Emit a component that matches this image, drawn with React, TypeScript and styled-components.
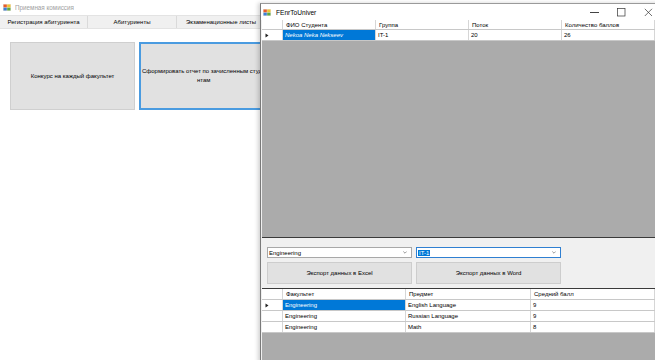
import React from "react";
import styled, { createGlobalStyle } from "styled-components";

const Global = createGlobalStyle`
  html, body { margin: 0; padding: 0; background: #ffffff; }
  body { font-family: "Liberation Sans", Arial, sans-serif; }
  #root { width: 655px; height: 360px; }
`;

const Desktop = styled.div`
  position: relative;
  width: 655px;
  height: 360px;
  overflow: hidden;
  background: #ffffff;
`;

/* ---------- back window ---------- */
const BackWindow = styled.div`
  display: flex;
  flex-direction: column;
  width: 655px;
  height: 360px;
  background: #ffffff;
`;

const BackTitle = styled.div`
  height: 15px;
  display: flex;
  align-items: center;
  gap: 4px;
  padding-left: 3px;
  font-size: 6.3px;
  color: #a0a0a0;
`;

const TabStrip = styled.div`
  height: 14px;
  display: flex;
  background: #f0f0f0;
  border-top: 1px solid #e3e3e3;
  border-bottom: 1px solid #e3e3e3;
  box-sizing: border-box;
`;

const Tab = styled.div<{ $w: number }>`
  width: ${(p) => p.$w}px;
  display: flex;
  align-items: center;
  justify-content: center;
  font-size: 6px;
  color: #000;
  border-right: 1px solid #dadada;
  box-sizing: border-box;
`;

const BackContent = styled.div`
  flex: 1;
  display: flex;
  align-items: flex-start;
  gap: 4px;
  padding: 13px 0 0 10px;
`;

const BigButton = styled.div<{ $focused?: boolean; $w: number }>`
  width: ${(p) => p.$w}px;
  height: 68px;
  flex-shrink: 0;
  box-sizing: border-box;
  background: #e1e1e1;
  border: ${(p) => (p.$focused ? "2px solid #4a9be0" : "1px solid #cfcfcf")};
  display: flex;
  align-items: center;
  justify-content: ${(p) => (p.$focused ? "flex-start" : "center")};
  padding-left: ${(p) => (p.$focused ? 1 : 0)}px;
  text-align: center;
  font-size: 6px;
  line-height: 9px;
  color: #000;
  white-space: nowrap;
`;

const ButtonLabel = styled.span`
  display: block;
  text-align: center;
`;

/* ---------- front window ---------- */
const FrontWindow = styled.div`
  position: absolute;
  left: 260px;
  top: 3px;
  width: 402px;
  height: 360px;
  display: flex;
  flex-direction: column;
  background: #f0f0f0;
  border-left: 1px solid #7a7a7a;
  border-top: 1px solid #9a9a9a;
  box-shadow: -2px 0 4px rgba(0, 0, 0, 0.18);
  box-sizing: border-box;
`;

const FrontTitle = styled.div`
  height: 16px;
  flex-shrink: 0;
  display: flex;
  align-items: center;
  background: #ffffff;
  padding-left: 2px;
  gap: 5px;
  font-size: 6.6px;
  color: #000;
`;

const TitleText = styled.span`
  flex: 1;
`;

const Controls = styled.div`
  display: flex;
  align-items: center;
  width: 81px;
  height: 100%;
`;

const CtrlBtn = styled.div`
  width: 27px;
  height: 100%;
  display: flex;
  align-items: center;
  justify-content: center;
`;

const GridArea = styled.div<{ $h: number }>`
  height: ${(p) => p.$h}px;
  flex-shrink: 0;
  background: #ababab;
  display: flex;
  flex-direction: column;
  margin-left: 1px;
  box-sizing: border-box;
`;

const TopGrid = styled(GridArea)`
  border-bottom: 1px solid #3a3a3a;
`;

const BottomGrid = styled(GridArea)`
  border-top: 1px solid #3a3a3a;
  flex: 1;
`;

const Row = styled.div<{ $h: number }>`
  display: grid;
  grid-template-columns: var(--cols);
  height: ${(p) => p.$h}px;
  background: #ffffff;
  border-bottom: 1px solid #c8c8c8;
  box-sizing: border-box;
`;

const Cell = styled.div<{ $sel?: boolean; $italic?: boolean; $header?: boolean }>`
  display: flex;
  align-items: center;
  padding-left: ${(p) => (p.$header ? 3 : 2)}px;
  font-size: 6px;
  color: ${(p) => (p.$sel ? "#ffffff" : "#000000")};
  background: ${(p) => (p.$sel ? "#0078d7" : "transparent")};
  font-style: ${(p) => (p.$italic ? "italic" : "normal")};
  border-right: 1px solid #d6d6d6;
  white-space: nowrap;
  overflow: hidden;
  box-sizing: border-box;
`;

const RowHead = styled.div`
  display: flex;
  align-items: center;
  padding-left: 3px;
  border-right: 1px solid #d6d6d6;
`;

const Panel = styled.div`
  height: 50px;
  flex-shrink: 0;
  display: grid;
  grid-template-columns: 145px 145px;
  grid-template-rows: 11px 22px;
  column-gap: 4px;
  row-gap: 4px;
  padding: 9px 0 0 6px;
  box-sizing: border-box;
`;

const Combo = styled.div<{ $focused?: boolean }>`
  background: #ffffff;
  border: 1px solid ${(p) => (p.$focused ? "#2f7fd1" : "#a8a8a8")};
  display: flex;
  align-items: center;
  padding: 0 4px 0 1px;
  font-size: 6px;
  color: #000;
  box-sizing: border-box;
`;

const ComboText = styled.span<{ $sel?: boolean }>`
  flex: 1;
  & > span {
    background: ${(p) => (p.$sel ? "#0078d7" : "transparent")};
    color: ${(p) => (p.$sel ? "#fff" : "#000")};
    padding: 0 ${(p) => (p.$sel ? 1 : 0)}px;
  }
`;

const PanelButton = styled.div`
  background: #e1e1e1;
  border: 1px solid #cdcdcd;
  display: flex;
  align-items: center;
  justify-content: center;
  font-size: 6px;
  color: #000;
  box-sizing: border-box;
`;

const Arrow = () => (
  <svg width="4" height="3" viewBox="0 0 4 3">
    <path d="M0.3 0.5 L2 2.2 L3.7 0.5" stroke="#555" strokeWidth="0.6" fill="none" />
  </svg>
);

const RowArrow = () => (
  <svg width="4" height="5" viewBox="0 0 4 5">
    <path d="M0.5 0.5 L3.5 2.5 L0.5 4.5 Z" fill="#222" />
  </svg>
);

const AppIcon = () => (
  <svg width="8" height="7" viewBox="0 0 8 7">
    <rect x="0" y="0" width="8" height="7" fill="#e9e4d8" />
    <rect x="0.5" y="0.5" width="3.3" height="2.8" fill="#e85a2a" />
    <rect x="4.2" y="0.5" width="3.3" height="2.8" fill="#f2c230" />
    <rect x="0.5" y="3.7" width="3.3" height="2.8" fill="#3c7fd8" />
    <rect x="4.2" y="3.7" width="3.3" height="2.8" fill="#5aa845" />
  </svg>
);

const topCols = "21px 93px 93px 93px 93px";
const botCols = "21px 123px 125px 124px";

export default function App() {
  return (
    <Desktop>
      <Global />
      <BackWindow>
        <BackTitle>
          <AppIcon />
          <span>Приемная комиссия</span>
        </BackTitle>
        <TabStrip>
          <Tab $w={88}>Регистрация абитуриента</Tab>
          <Tab $w={89}>Абитуриенты</Tab>
          <Tab $w={89}>Экзаменационные листы</Tab>
        </TabStrip>
        <BackContent>
          <BigButton $w={125}>
            <ButtonLabel>Конкурс на каждый факультет</ButtonLabel>
          </BigButton>
          <BigButton $w={125} $focused>
            <ButtonLabel>
              Сформировать отчет по зачисленным студе
              <br />
              нтам
            </ButtonLabel>
          </BigButton>
        </BackContent>
      </BackWindow>

      <FrontWindow>
        <FrontTitle>
          <AppIcon />
          <TitleText>FEnrToUniver</TitleText>
          <Controls>
            <CtrlBtn>
              <svg width="9" height="3" viewBox="0 0 9 3" shapeRendering="crispEdges">
                <rect x="0" y="1" width="9" height="1" fill="#444" />
              </svg>
            </CtrlBtn>
            <CtrlBtn>
              <svg width="9" height="9" viewBox="0 0 9 9">
                <rect x="0.5" y="0.5" width="7.5" height="7.5" stroke="#333" strokeWidth="0.7" fill="none" />
              </svg>
            </CtrlBtn>
            <CtrlBtn>
              <svg width="9" height="9" viewBox="0 0 9 9">
                <path d="M0.8 0.8 L8 8 M8 0.8 L0.8 8" stroke="#333" strokeWidth="0.7" />
              </svg>
            </CtrlBtn>
          </Controls>
        </FrontTitle>

        <TopGrid $h={218} style={{ ["--cols" as any]: topCols }}>
          <Row $h={10}>
            <RowHead />
            <Cell $header>ФИО Студента</Cell>
            <Cell $header>Группа</Cell>
            <Cell $header>Поток</Cell>
            <Cell $header>Количество баллов</Cell>
          </Row>
          <Row $h={11}>
            <RowHead>
              <RowArrow />
            </RowHead>
            <Cell $sel $italic>Nekoa Neka Nekseev</Cell>
            <Cell>IT-1</Cell>
            <Cell>20</Cell>
            <Cell>26</Cell>
          </Row>
        </TopGrid>

        <Panel>
          <Combo>
            <ComboText><span>Engineering</span></ComboText>
            <Arrow />
          </Combo>
          <Combo $focused>
            <ComboText $sel><span>IT-1</span></ComboText>
            <Arrow />
          </Combo>
          <PanelButton>Экспорт данных в Excel</PanelButton>
          <PanelButton>Экспорт данных в Word</PanelButton>
        </Panel>

        <BottomGrid $h={72} style={{ ["--cols" as any]: botCols }}>
          <Row $h={11}>
            <RowHead />
            <Cell $header>Факультет</Cell>
            <Cell $header>Предмет</Cell>
            <Cell $header>Средний балл</Cell>
          </Row>
          <Row $h={11}>
            <RowHead>
              <RowArrow />
            </RowHead>
            <Cell $sel>Engineering</Cell>
            <Cell>English Language</Cell>
            <Cell>9</Cell>
          </Row>
          <Row $h={11}>
            <RowHead />
            <Cell>Engineering</Cell>
            <Cell>Russian Language</Cell>
            <Cell>9</Cell>
          </Row>
          <Row $h={11}>
            <RowHead />
            <Cell>Engineering</Cell>
            <Cell>Math</Cell>
            <Cell>8</Cell>
          </Row>
        </BottomGrid>
      </FrontWindow>
    </Desktop>
  );
}
